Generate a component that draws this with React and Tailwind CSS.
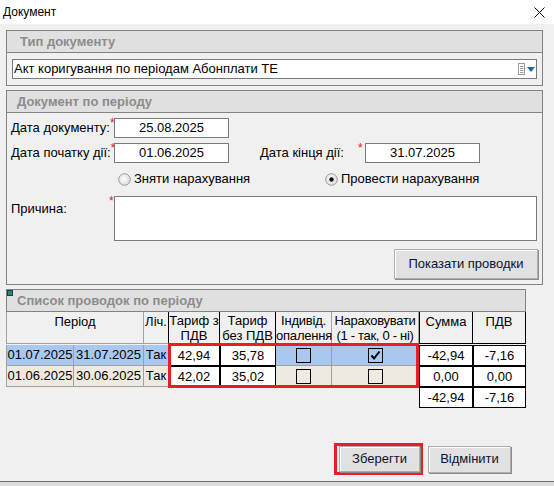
import React from "react";

const Star = () => (
  <span className="self-start text-[12px] leading-[10px] text-[#e4161c]">*</span>
);

const Group = ({ title, titlePad = "pl-[10px]", className = "", children }) => (
  <div className={`border border-[#828282] ${className}`}>
    <div
      className={`h-[22px] bg-[#e0e0e0] border-b border-[#828282] flex items-center ${titlePad} text-[13px] font-bold text-[#8c8c8c]`}
    >
      {title}
    </div>
    {children}
  </div>
);

const DateInput = ({ value }) => (
  <div className="w-[115px] h-[20px] shrink-0 bg-white border border-[#7a7a7a] flex items-center justify-center text-[13px] text-black">
    {value}
  </div>
);

const Radio = ({ checked }) => (
  <svg width="13" height="13" viewBox="0 0 13 13">
    <defs>
      <radialGradient id="rg" cx="0.45" cy="0.45" r="0.6">
        <stop offset="0" stopColor="#ffffff" />
        <stop offset="1" stopColor="#d8d8d8" />
      </radialGradient>
    </defs>
    <circle cx="6.5" cy="6.5" r="5.8" fill="url(#rg)" stroke="#9a9a9a" strokeWidth="1" />
    {checked && <circle cx="6.5" cy="6.5" r="2.2" fill="#111" />}
  </svg>
);

const Check = ({ checked }) => (
  <div className="w-[15px] h-[15px] border border-black flex items-center justify-center">
    {checked && (
      <svg width="13" height="13" viewBox="0 0 13 13">
        <path d="M2.5 6.5 L5 9.5 L10.5 2.5" fill="none" stroke="#000" strokeWidth="2" />
      </svg>
    )}
  </div>
);

const Button = ({ children, className = "" }) => (
  <div
    className={`bg-[#e1e1e1] border border-[#adadad] shadow-[inset_1px_1px_0_#ffffff,1px_1px_0_#8c8c8c] flex items-center justify-center text-[13px] text-[#101030] ${className}`}
  >
    {children}
  </div>
);

const rows = [
  { from: "01.07.2025", to: "31.07.2025", li: "Так", t1: "42,94", t2: "35,78", ind: false, nar: true, sum: "-42,94", pdv: "-7,16", bg: "bg-[#a8c8f0]" },
  { from: "01.06.2025", to: "30.06.2025", li: "Так", t1: "42,02", t2: "35,02", ind: false, nar: false, sum: "0,00", pdv: "0,00", bg: "bg-[#eeeae0]" },
];

export default function App() {
  return (
    <div className="w-[554px] h-[486px] bg-[#f0f0f0] font-['Liberation_Sans',Arial,sans-serif] text-black overflow-hidden">
      {/* title bar */}
      <div className="h-[24px] bg-white flex items-center justify-between pl-[3px] pr-[9px]">
        <span className="text-[12px]">Документ</span>
        <svg width="11" height="11" viewBox="0 0 11 11">
          <path d="M0.5 0.5 L10.5 10.5 M10.5 0.5 L0.5 10.5" stroke="#000" strokeWidth="1" />
        </svg>
      </div>

      <div className="h-[458px] pt-[6px] pl-[6px] flex flex-col border-b border-[#6d6d6d]">
        {/* Тип документу */}
        <Group title="Тип документу" titlePad="pl-[13px]" className="w-[537px]">
          <div className="px-[5px] pt-[6px] pb-[6px]">
            <div className="h-[20px] bg-white border border-[#7a7a7a] flex items-center justify-between pl-[1px] pr-[1px] text-[13px]">
              <span>Акт коригування по періодам Абонплати ТЕ</span>
              <div className="flex items-center gap-[1px]">
                <svg width="8" height="12" viewBox="0 0 8 12">
                  <rect x="0.5" y="0.5" width="6" height="11" fill="#fff" stroke="#9a9a9a" />
                  <path d="M2 3.5 H5.5 M2 5.5 H5.5 M2 7.5 H5.5 M2 9.5 H5.5" stroke="#9a9a9a" />
                </svg>
                <svg width="8" height="5" viewBox="0 0 8 5">
                  <path d="M0 0 H8 L4 5 Z" fill="#1565c0" />
                </svg>
              </div>
            </div>
          </div>
        </Group>

        {/* Документ по періоду */}
        <Group title="Документ по періоду" className="w-[537px] mt-[4px]">
          <div className="pl-[4px] pr-[4px] pt-[5px] pb-[5px] text-[13px]">
            <div className="flex items-center h-[20px]">
              <div className="w-[103px] shrink-0 flex items-center whitespace-nowrap">
                <span>Дата документу:</span>
                <Star />
              </div>
              <DateInput value="25.08.2025" />
            </div>
            <div className="flex items-center h-[20px] mt-[5px]">
              <div className="w-[103px] shrink-0 flex items-center whitespace-nowrap">
                <span>Дата початку дії:</span>
                <Star />
              </div>
              <DateInput value="01.06.2025" />
              <div className="w-[105px] shrink-0 ml-[31px] flex items-center whitespace-nowrap">
                <span className="w-[98px]">Дата кінця дії:</span>
                <Star />
              </div>
              <DateInput value="31.07.2025" />
            </div>
            <div className="flex items-center h-[16px] mt-[8px] ml-[107px] whitespace-nowrap">
              <div className="w-[207px] flex items-center gap-[3px]">
                <Radio />
                <span>Зняти нарахування</span>
              </div>
              <div className="flex items-center gap-[3px]">
                <Radio checked />
                <span>Провести нарахування</span>
              </div>
            </div>
            <div className="flex mt-[9px]">
              <div className="w-[103px] shrink-0 flex">
                <span className="pt-[3px] w-[98px]">Причина:</span>
                <Star />
              </div>
              <div className="w-[423px] h-[45px] bg-white border border-[#7a7a7a]" />
            </div>
            <div className="flex justify-end mt-[8px]">
              <Button className="w-[144px] h-[30px]">Показати проводки</Button>
            </div>
          </div>
        </Group>

        {/* Список проводок по періоду */}
        <div className="relative w-[520px] mt-[4px] text-[13px]">
          <div className="h-[23px] bg-[#e0e0e0] border border-[#828282] flex items-center pl-[10px] font-bold text-[#8c8c8c]">
            Список проводок по періоду
          </div>
          <div className="absolute left-[1px] top-[1px] w-[6px] h-[6px] bg-[#1d8c86] border border-[#334]" />

          {/* header row */}
          <div className="flex h-[32px] bg-[#f0f0f0] leading-[15px] text-center">
            <div className="w-[138px] border-x border-b border-[#a0a0a0] pt-[2px]">Період</div>
            <div className="w-[24px] border-b border-[#a0a0a0] pt-[2px]">Ліч.</div>
            <div className="w-[52px] border-x border-b border-black pt-[1px]">Тариф з<br />ПДВ</div>
            <div className="w-[56px] border-r border-b border-black pt-[1px] whitespace-nowrap">Тариф<br />без ПДВ</div>
            <div className="w-[56px] border-r border-b border-[#a0a0a0] pt-[1px] whitespace-nowrap tracking-[-0.2px]">Індивід.<br />опалення</div>
            <div className="w-[87px] border-r border-b border-[#a0a0a0] pt-[1px] whitespace-nowrap tracking-[-0.3px]">Нараховувати<br />(1 - так, 0 - ні)</div>
            <div className="w-[54px] border border-t-0 border-black pt-[2px]">Сумма</div>
            <div className="w-[53px] border-r border-b border-black pt-[2px]">ПДВ</div>
          </div>

          <div className="mt-[1px]">
            {rows.map((r, i) => (
              <div key={i} className="flex h-[21px] leading-[19px] text-center">
                <div className={`w-[68px] border-x border-b border-[#a0a0a0] ${r.bg}`}>{r.from}</div>
                <div className={`w-[70px] border-r border-b border-[#a0a0a0] ${r.bg}`}>{r.to}</div>
                <div className={`w-[24px] border-b border-[#a0a0a0] ${r.bg}`}>{r.li}</div>
                <div className="w-[52px] border border-black bg-white">{r.t1}</div>
                <div className="w-[56px] border border-black bg-white">{r.t2}</div>
                <div className={`w-[56px] border-r border-b border-[#a0a0a0] flex items-center justify-center ${r.bg}`}>
                  <Check checked={r.ind} />
                </div>
                <div className={`w-[87px] border-r border-b border-[#a0a0a0] flex items-center justify-center ${r.bg}`}>
                  <Check checked={r.nar} />
                </div>
                <div className="w-[54px] border border-black bg-white">{r.sum}</div>
                <div className="w-[53px] border border-black bg-white">{r.pdv}</div>
              </div>
            ))}
            <div className="flex h-[21px] leading-[19px] text-center">
              <div className="w-[413px]" />
              <div className="w-[54px] border border-black bg-white">-42,94</div>
              <div className="w-[53px] border border-black bg-white">-7,16</div>
            </div>
          </div>

          <div className="absolute left-[162px] top-[54px] w-[251px] h-[45px] border-[3px] border-[#ed1c24] pointer-events-none" />
        </div>

        {/* footer buttons */}
        <div className="flex justify-end items-center mt-auto mb-[6px] pr-[43px]">
          <div className="border-[3px] border-[#ed1c24] pl-[2px]">
            <Button className="w-[81px] h-[26px]">Зберегти</Button>
          </div>
          <Button className="w-[83px] h-[27px] ml-[5px]">Відмінити</Button>
        </div>
      </div>
      <div className="h-[4px] bg-[#dcdcdc]" />
    </div>
  );
}
